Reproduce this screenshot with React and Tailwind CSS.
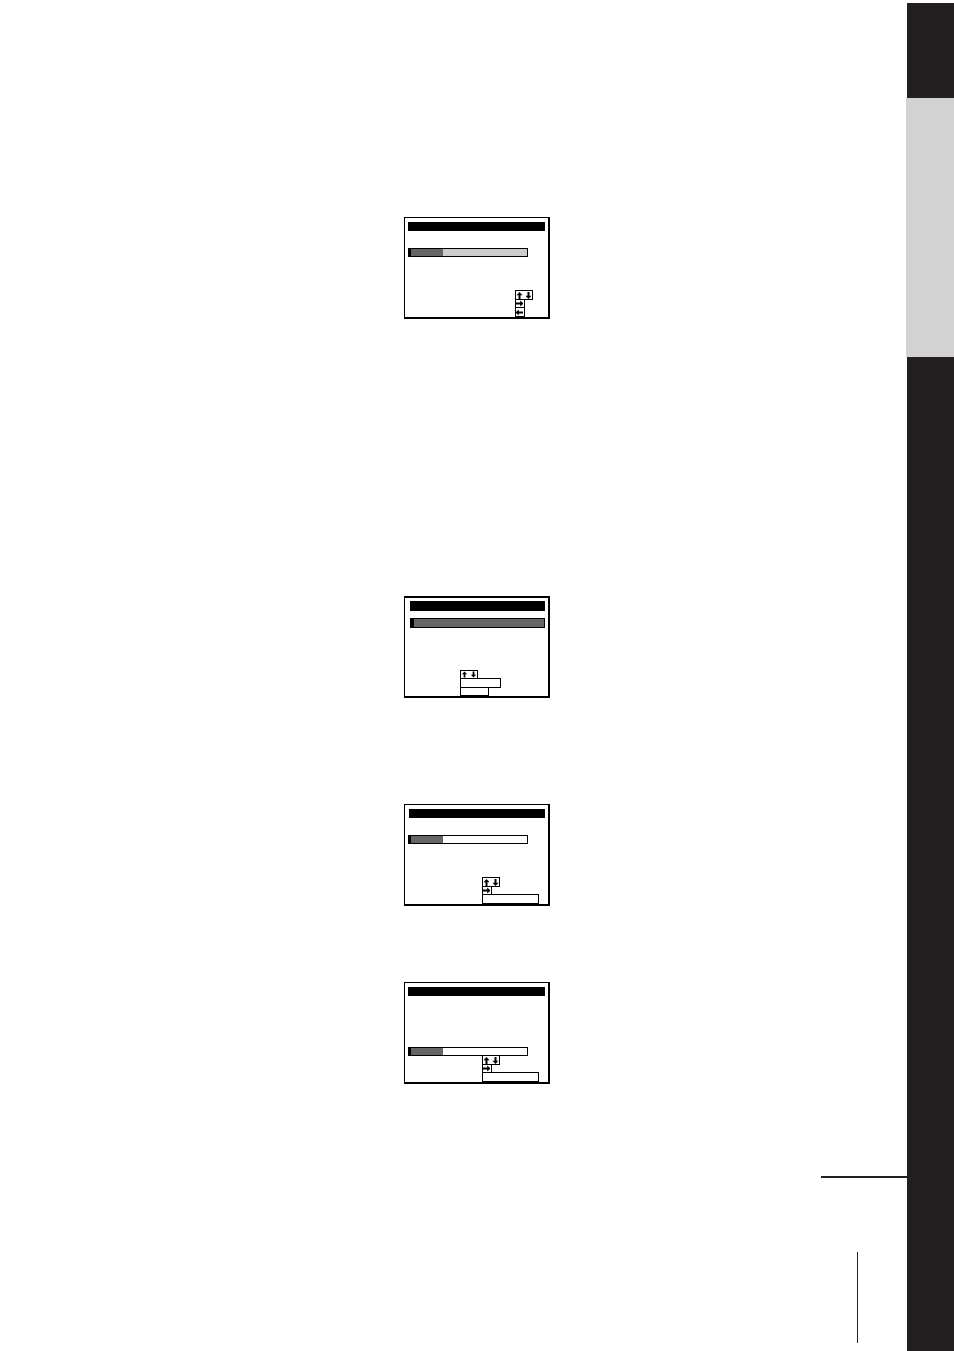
import clsx from "clsx";

/* ========================================
   On-screen menus
======================================== */

const ARROWS = {
    up: "M3.5 0 6.5 3.3H4.5V7H2.5V3.3H0.5Z",
    down: "M3.5 7 6.5 3.7H4.5V0H2.5V3.7H0.5Z",
    right: "M7.5 3.5 4.2 6.5V4.5H0V2.5H4.2V0.5Z",
    left: "M-0.5 3.5 2.8 6.5V4.5H7V2.5H2.8V0.5Z",
};

const SCREENS = [
    {
        id: "picture",
        frame: "mt-[217px] border-t pt-1",
        title: "ml-[3px] w-[137px] h-[9px]",
        row: "mt-[17px] ml-[3px] w-[120px] h-[9px] border-l-3 bg-[#cccccc]",
        level: "w-8",
        legend: "mt-auto ml-[110px]",
        keys: [
            { size: "w-[18px] h-2.5", arrows: ["up", "down"] },
            { size: "w-2.5 h-[9px]", arrows: ["right"] },
            { size: "w-2.5 h-2.5", arrows: ["left"] },
        ],
    },
    {
        id: "list",
        frame: "mt-[277px] border-t-2 pt-[3px]",
        title: "ml-[5px] w-[135px] h-2.5",
        row: "mt-[7px] ml-[5px] w-[135px] h-2.5 border-l-4 bg-white",
        level: "w-full",
        legend: "mt-auto ml-[55px]",
        keys: [
            { size: "w-[18px] h-[9px]", arrows: ["up", "down"], small: true },
            { size: "w-[41px] h-2.5", arrows: [] },
            { size: "w-[29px] h-[9px]", arrows: [] },
        ],
    },
    {
        id: "settings",
        frame: "mt-[106px] border-t pt-1",
        title: "ml-1 w-[136px] h-[9px]",
        row: "mt-[17px] ml-[3px] w-[120px] h-[9px] border-l-3 bg-white",
        level: "w-8",
        legend: "mt-auto ml-[77px]",
        keys: [
            { size: "w-[18px] h-2.5", arrows: ["up", "down"] },
            { size: "w-2.5 h-[9px]", arrows: ["right"] },
            { size: "w-[57px] h-2.5", arrows: [] },
        ],
    },
    {
        id: "setup",
        frame: "mt-[76px] border-t pt-1",
        title: "ml-[3px] w-[137px] h-[9px]",
        row: "mt-[51px] ml-[3px] w-[120px] h-[9px] border-l-3 bg-white",
        level: "w-8",
        // shares its top edge with the row above
        legend: "-mt-px ml-[77px]",
        keys: [
            { size: "w-[18px] h-2.5", arrows: ["up", "down"] },
            { size: "w-2.5 h-[9px]", arrows: ["right"] },
            { size: "w-[57px] h-2.5", arrows: [] },
        ],
    },
];

function Arrow({ name, small }) {
    return (
        <svg
            viewBox={small ? "-0.5 -0.5 8 8" : "0 0 7 7"}
            className="size-[7px] shrink-0"
            aria-hidden="true"
        >
            <path d={ARROWS[name]} />
        </svg>
    );
}

function Screen({ screen }) {
    return (
        <section
            className={clsx(
                "flex h-[102px] w-[146px] flex-col border-r-2 border-b-2 border-l border-black",
                screen.frame
            )}
        >
            <div className={clsx("shrink-0 bg-black", screen.title)} />

            <div className={clsx("shrink-0 border-y border-r border-black", screen.row)}>
                <div className={clsx("h-full bg-[#666666]", screen.level)} />
            </div>

            <div className={clsx("flex flex-col items-start", screen.legend)}>
                {screen.keys.map((key, i) => (
                    <kbd
                        key={i}
                        className={clsx(
                            "flex shrink-0 items-center justify-between border border-black bg-white",
                            i > 0 && "-mt-px",
                            key.size
                        )}
                    >
                        {key.arrows.map((name) => (
                            <Arrow key={name} name={name} small={key.small} />
                        ))}
                    </kbd>
                ))}
            </div>
        </section>
    );
}

export default function App() {
    return (
        <div className="flex min-h-screen bg-white">
            <main className="flex flex-1 flex-col pb-2">
                <div className="flex flex-col items-center pl-12">
                    {SCREENS.map((screen) => (
                        <Screen key={screen.id} screen={screen} />
                    ))}
                </div>

                <footer className="mt-[92px] flex flex-col items-end">
                    <div className="-mr-px h-0.5 w-[86px] bg-[#231f20]" />
                    <div className="mt-[74px] mr-12 h-[91px] w-px bg-[#231f20]" />
                </footer>
            </main>

            {/* chapter tabs */}
            <aside className="flex w-12 shrink-0 flex-col pt-[3px]">
                <div className="ml-px h-[95px] bg-[#231f20]" />
                <div className="h-[259px] bg-[#d2d2d2]" />
                <div className="ml-px flex-1 bg-[#231f20]" />
            </aside>
        </div>
    );
}
